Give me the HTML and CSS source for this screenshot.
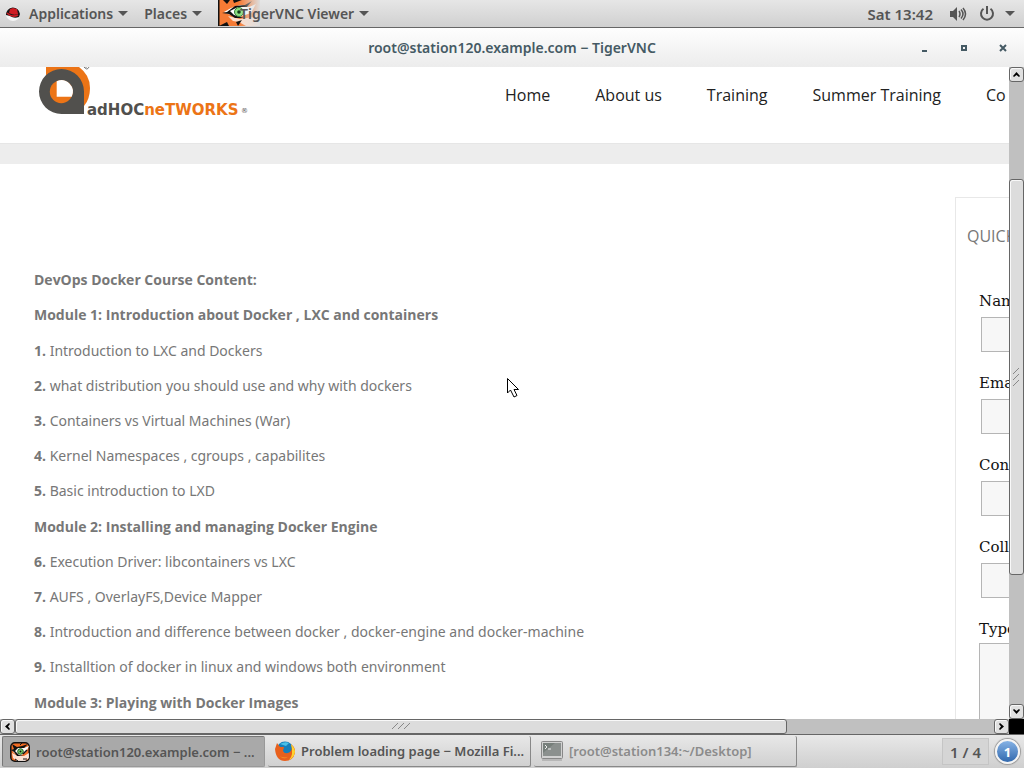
FILE: index.html
```html
<!DOCTYPE html>
<html lang="en">
<head>
<meta charset="utf-8">
<meta name="viewport" content="width=device-width, initial-scale=1">
<title>root@station120.example.com − TigerVNC</title>
<link rel="stylesheet" href="styles.css">
</head>
<body>
<header class="topbar">
  <button class="menu menu-apps" type="button">
    <svg width="14" height="14" viewBox="0 0 14 14" aria-hidden="true"><circle cx="7" cy="7" r="7" fill="#f4f4f4"/><path d="M0 8a7 7 0 0 1 14-1l-1 3Q8 12 4 9z" fill="#171717"/><path d="M3 6l1-4 3-1 4 1 1 5Q8 9 3 6z" fill="#cf1b22"/><path d="M1 6q5 5 11 2" stroke="#cf1b22" stroke-width="1.500" fill="none"/></svg>
    <span>Applications</span><i class="caret"></i>
  </button>
  <button class="menu menu-places" type="button"><span>Places</span><i class="caret"></i></button>
  <button class="menu menu-viewer" type="button">
    <svg class="tiger-large" width="42" height="26" viewBox="0 0 42 26" aria-hidden="true">
      <defs><linearGradient id="fade" x1="0" x2="1"><stop offset=".5" stop-color="#ddd" stop-opacity="0"/><stop offset="1" stop-color="#ddd"/></linearGradient></defs>
      <path d="M0 0h42v26H0z" fill="#f67b35"/>
      <path d="M10 16l12 3 14-2 6-4v13H28l-7-4-6-1z" fill="#fff" opacity=".75"/>
      <path d="M0 0h1.500v26H0zM5 0l4 4 3-4zM15 0l1 3 8-3zM1 26l8-4 2 4zM18 22l6-2-4 6z" fill="#111"/>
      <path d="M6 12l7-4 9-3 9 2 7-3-5 9-12 4-11-3z" fill="#fff"/>
      <path d="M4 13l5-1 8-6 10-1 7-4-5 6-9 0-8 4 4 4 10 3-9 0-6-4z" fill="#111"/>
      <circle cx="21" cy="12" r="4.500" fill="#8be080" stroke="#347a38"/><circle cx="21" cy="12" r="1.800" fill="#123b18"/>
      <path d="M0 0h42v26H0z" fill="url(#fade)"/>
    </svg>
    <span>TigerVNC Viewer</span><i class="caret"></i>
  </button>
  <div class="status">
    <time>Sat 13:42</time>
    <svg class="volume" width="17" height="14" viewBox="0 0 17 14" fill="none" stroke="#555" aria-label="Volume" role="img"><path d="M0 4h3l4-4v14l-4-4H0z" fill="#555" stroke="none"/><path d="M9 4q2 3 0 6M11 2.500q4 4.500 0 9M13 1q5 6 0 12" stroke-width="1.500"/></svg>
    <svg class="power" width="16" height="16" viewBox="0 0 16 16" fill="none" stroke="#555" stroke-width="2" aria-label="Power" role="img"><path d="M8 0v8M4.500 2.800a6 6 0 1 0 7 0"/></svg>
    <i class="caret"></i>
  </div>
</header>

<div class="titlebar">
  <h1>root@station120.example.com − TigerVNC</h1>
  <div class="window-controls">
    <button type="button" aria-label="Minimize"><svg width="8" height="8"><path d="M1 6h5v2H1z" fill="#455a64"/></svg></button>
    <button type="button" aria-label="Maximize"><svg width="8" height="8"><path d="M2 2h4v4H2z" fill="none" stroke="#455a64" stroke-width="2"/></svg></button>
    <button type="button" aria-label="Close"><svg width="8" height="8"><path d="M1 1l6 6M7 1L1 7" stroke="#455a64" stroke-width="2"/></svg></button>
  </div>
</div>

<div class="viewer">
  <div class="remote">
    <div class="site-header">
      <svg class="logo" width="216" height="52" viewBox="0 0 216 52" role="img" aria-label="adhocnetworks">
        <path d="M11 0h33q11 8 11 21 0 11-6 18L11 22z" fill="#ec7416"/>
        <path d="M26.500 2a22.500 22.500 0 0 0 0 45H49V24.500A22.500 22.500 0 0 0 26.500 2z" fill="#51504d"/>
        <circle cx="26.300" cy="24.700" r="11.500" fill="#ec7416"/>
        <path d="M21.700 14.200A11.500 11.500 0 0 1 36.700 29.700H21.700z" fill="#fff"/>
        <path d="M49 0q3 4 5 0M51 0v1" fill="none" stroke="#777"/>
        <text x="52" y="48" class="logo-text" fill="#51504d">adHOC<tspan fill="#ec7416">neTWORKS</tspan></text>
        <text x="206" y="46" class="logo-mark">®</text>
      </svg>
      <nav>
        <a href="#">Home</a><a href="#">About us</a><a href="#">Training</a><a href="#">Summer Training</a><a href="#">Co</a>
      </nav>
    </div>
    <div class="band"></div>
    <div class="page">
      <main>
        <h2>DevOps Docker Course Content:</h2>
        <h2>Module 1: Introduction about Docker , LXC and containers</h2>
        <p><b>1.</b> Introduction to LXC and Dockers</p>
        <p><b>2.</b> what distribution you should use and why with dockers</p>
        <p><b>3.</b> Containers vs Virtual Machines (War)</p>
        <p><b>4.</b> Kernel Namespaces , cgroups , capabilites</p>
        <p><b>5.</b> Basic introduction to LXD</p>
        <h2>Module 2: Installing and managing Docker Engine</h2>
        <p><b>6.</b> Execution Driver: libcontainers vs LXC</p>
        <p><b>7.</b> AUFS , OverlayFS,Device Mapper</p>
        <p><b>8.</b> Introduction and difference between docker , docker-engine and docker-machine</p>
        <p><b>9.</b> Installtion of docker in linux and windows both environment</p>
        <h2>Module 3: Playing with Docker Images</h2>
      </main>
      <aside>
        <h3>QUICK</h3>
        <form>
          <label for="name">Name</label><input id="name" type="text">
          <label for="email">Email</label><input id="email" type="text">
          <label for="contact">Contact</label><input id="contact" type="text">
          <label for="college">College</label><input id="college" type="text">
          <label for="type">Type</label><textarea id="type"></textarea>
        </form>
      </aside>
    </div>
    <svg class="cursor" width="13" height="20" viewBox="0 0 13 20" aria-hidden="true"><path d="M.5 .5v14.500l3-3 3.500 7 3-1.500-3-6h4.500z" fill="#fff" stroke="#000"/></svg>
  </div>
  <div class="scroll scroll-y">
    <button type="button" aria-label="Scroll up"><svg width="7" height="5"><path d="M0 4L3.500 0 7 4 6 5 3.500 3 1 5z"/></svg></button>
    <span class="space-top"></span>
    <span class="thumb"><svg width="9" height="20"><path d="M1 7l6-6M1 13l6-6M1 19l6-6" stroke="#888"/></svg></span>
    <span class="space-bottom"></span>
    <button type="button" aria-label="Scroll down"><svg width="7" height="5"><path d="M0 1L3.500 5 7 1 6 0 3.500 2 1 0z"/></svg></button>
  </div>
  <div class="scroll scroll-x">
    <button type="button" aria-label="Scroll left"><svg width="5" height="7"><path d="M4 0L0 3.500 4 7 5 6 3 3.500 5 1z"/></svg></button>
    <span class="thumb"><svg width="20" height="9"><path d="M1 7l6-6M7 7l6-6M13 7l6-6" stroke="#888"/></svg></span>
    <span class="space-right"></span>
    <button type="button" aria-label="Scroll right"><svg width="5" height="7"><path d="M1 0l4 3.500L1 7 0 6l2-2.500L0 1z"/></svg></button>
  </div>
  <div class="corner"></div>
</div>

<footer class="taskbar">
  <button class="task active" type="button">
    <svg width="20" height="20" viewBox="0 0 20 20" aria-hidden="true">
      <rect x=".8" y=".8" width="18.400" height="18.400" rx="4" fill="#f26c24" stroke="#111" stroke-width="1.500"/>
      <path d="M2 11l4 2 8 1 5-3v5l-4 3H7l-4-3z" fill="#fff" opacity=".8"/>
      <path d="M2 8l6-2 6 0 5-2-3 6-6 4-6-3z" fill="#fff"/>
      <path d="M2 2l5 3 5-1 6-2-4 4H8L5 9l4 4 5 1-7 0-3-4-3-2 3-1z" fill="#111"/>
      <path d="M12 1l-2 2M13 17l4 0M5 17l3 2" stroke="#111"/>
      <circle cx="10.500" cy="9.500" r="2.800" fill="#78d66b" stroke="#1d5020"/><circle cx="10.500" cy="9.500" r="1" fill="#111"/>
      <path d="M13 12l4-4" stroke="#111" stroke-width="1.500"/>
    </svg>
    <span>root@station120.example.com − ...</span></button>
  <button class="task" type="button">
    <svg width="20" height="20" viewBox="0 0 20 20" aria-hidden="true"><circle cx="10" cy="9" r="8.500" fill="#167fba"/><path d="M5 3q5-3 9-1l-3 3q-3-1-6-2z" fill="#49c0e8"/><path d="M0 8l2-6 3 4h4l-1 4q2 4 7 1 3-3 1-8 5 4 4 9-2 8-10 8Q1 20 0 8z" fill="#e8601c"/><path d="M16 3q4 4 4 8-1 6-6 8 5-5 2-16z" fill="#ffd22d"/><path d="M2 12q4 6 11 4-5 4-11-4z" fill="#f99a25"/></svg>
    <span>Problem loading page − Mozilla Fi...</span></button>
  <button class="task muted" type="button">
    <svg width="22" height="20" viewBox="0 0 22 20" aria-hidden="true"><rect x=".5" y=".5" width="21" height="17" rx="1" fill="#d1d1d1" stroke="#888"/><path d="M2 2h18v13H2z" fill="#777f7b"/><path d="M2 12L14 2h6v13H2z" fill="#8b908e"/><path d="M4 4l2 2-2 2M7 8h3" fill="none" stroke="#eee"/><path d="M1 19h20" stroke="#999"/></svg>
    <span>[root@station134:~/Desktop]</span></button>
  <div class="pager">1 / 4</div>
  <button class="badge" type="button">1</button>
</footer>
</body>
</html>
```
FILE: styles.css
```css
* { box-sizing: border-box; }
body {
  margin: 0;
  height: 100vh;
  display: flex;
  flex-direction: column;
  overflow: hidden;
  background: #fff;
  font-family: "Open Sans", sans-serif;
}
button { font: inherit; color: inherit; padding: 0; border: 0; background: none; }
svg { display: block; flex: none; }

.topbar {
  flex: none;
  height: 28px;
  display: flex;
  align-items: center;
  padding: 0 9px 0 6px;
  color: #555;
  font: 600 14px/20px "Noto Sans", sans-serif;
  background: linear-gradient(#e6e6e6, #d0d0d0);
  border-bottom: 1px solid #666;
}
.menu { display: flex; align-items: center; height: 27px; white-space: nowrap; }
.menu-apps svg { margin-right: 9px; }
.menu-places { margin-left: 16px; }
.menu-viewer { margin-left: 16px; }
.tiger-large { align-self: flex-start; margin-right: -20px; }
.menu-viewer span { z-index: 1; }
.caret {
  flex: none;
  margin-left: 5px;
  border: 5px solid transparent;
  border-top-color: #555;
  border-bottom: 0;
}
.status { margin-left: auto; display: flex; align-items: center; }
.status time { font-size: 15px; }
.volume { margin-left: 17px; }
.power { margin-left: 12px; }
.status .caret { margin-left: 10px; }

.titlebar {
  flex: none;
  height: 39px;
  display: grid;
  grid-template-columns: 1fr auto 1fr;
  align-items: center;
  background: linear-gradient(#fefefe, #ececec);
  color: #455a64;
}
.titlebar h1 { grid-column: 2; margin: 0; font: 600 14px/20px "Noto Sans", sans-serif; }
.window-controls { display: flex; justify-content: flex-end; gap: 31px; padding-right: 17px; }

.viewer {
  flex: 1;
  min-height: 0;
  display: grid;
  grid-template: minmax(0, 1fr) 15px / minmax(0, 1fr) 15px;
}
.remote { position: relative; display: flex; flex-direction: column; overflow: hidden; }
.cursor { position: absolute; left: 507px; top: 311px; pointer-events: none; }
.site-header { flex: none; display: flex; height: 76px; }
.logo { margin-left: 35px; }
.logo-text { font: bold 15px "DejaVu Sans", sans-serif; }
.logo-mark { font: 7px "DejaVu Sans", sans-serif; fill: #555; }
nav { display: flex; gap: 45px; margin-left: 254px; padding-top: 16px; white-space: nowrap; }
nav a { color: #222; text-decoration: none; font-size: 16px; line-height: 24px; }
.band { flex: none; height: 21px; background: #ededed; border-top: 1px solid #e6e6e6; }
.page { flex: 1; min-height: 0; display: flex; }
main { flex: 1; padding: 98px 20px 0 34px; color: #777; font-size: 14px; line-height: 35px; }
main h2, main p { margin: 0; font-size: 14px; }
main p { font-family: "Noto Sans", sans-serif; }
main b { font-family: "Open Sans", sans-serif; }
main h2 + h2 + p, main p + h2 { margin-top: 1px; }
aside {
  flex: none;
  width: 54px;
  margin-top: 33px;
  padding: 26px 0 0 11px;
  overflow: hidden;
  border: solid #e8e8e8;
  border-width: 1px 0 0 1px;
}
aside h3 { margin: 0; color: #777; font-size: 16px; font-weight: 400; line-height: 24px; }
form { width: 240px; margin-top: 43px; padding-left: 12px; color: #111; }
form label { display: block; font: 15px/20px "DejaVu Serif", serif; }
form input, form textarea { display: block; background: #f7f7f7; border: 1px solid #b5b5b5; border-radius: 0; }
form input { width: 200px; height: 35px; margin: 6px 0 21px 2px; }
form textarea { width: 204px; height: 120px; margin-top: 4px; }

.scroll { display: flex; background: #c0c0c0; }
.scroll-y { flex-direction: column; }
.scroll button, .thumb {
  display: flex;
  align-items: center;
  justify-content: center;
  border: 1px solid #666;
  border-radius: 3px;
  box-shadow: inset 1px 1px #f8f8f8;
  background: #dcdcdc;
}
.scroll button { flex: none; width: 15px; height: 15px; background: #e0e0e0; }
.scroll-y .thumb { flex: 396 1 0; }
.scroll-x .thumb { flex: 772 1 0; }
.space-top { flex: 97 1 0; }
.space-bottom { flex: 129 1 0; }
.space-right { flex: 207 1 0; }
.corner { background: #000; }

.taskbar {
  flex: none;
  height: 34px;
  display: flex;
  gap: 3px;
  align-items: center;
  padding: 0 4px 0 2px;
  color: #555;
  font: 600 13px/20px "Noto Sans", sans-serif;
  background: linear-gradient(#e8e8e8, #cfcfcf);
  border-top: 1px solid #666;
}
.task {
  flex: 0 1 263px;
  min-width: 0;
  height: 31px;
  display: flex;
  align-items: center;
  gap: 6px;
  padding-left: 7px;
  white-space: nowrap;
  overflow: hidden;
  border: solid #888;
  border-width: 0 1px 1px 0;
  border-radius: 2px;
}
.task.active { background: #a9a9a9; border-width: 1px; border-color: #777 #999 #999 #777; }
.task.muted { color: #8b8b8b; }
.pager {
  margin-left: auto;
  width: 47px;
  height: 27px;
  line-height: 26px;
  text-align: center;
  font-size: 15px;
  background: #d5d5d5;
  border: 1px solid #c5c5c5;
}
.badge {
  margin-left: 3px;
  width: 25px;
  height: 25px;
  border: 2px solid #f5f5f5;
  border-radius: 50%;
  box-shadow: 0 0 1px 1px #999;
  background: linear-gradient(#85b2e5, #3269ae);
  color: #fff;
  font-weight: bold;
}
```
